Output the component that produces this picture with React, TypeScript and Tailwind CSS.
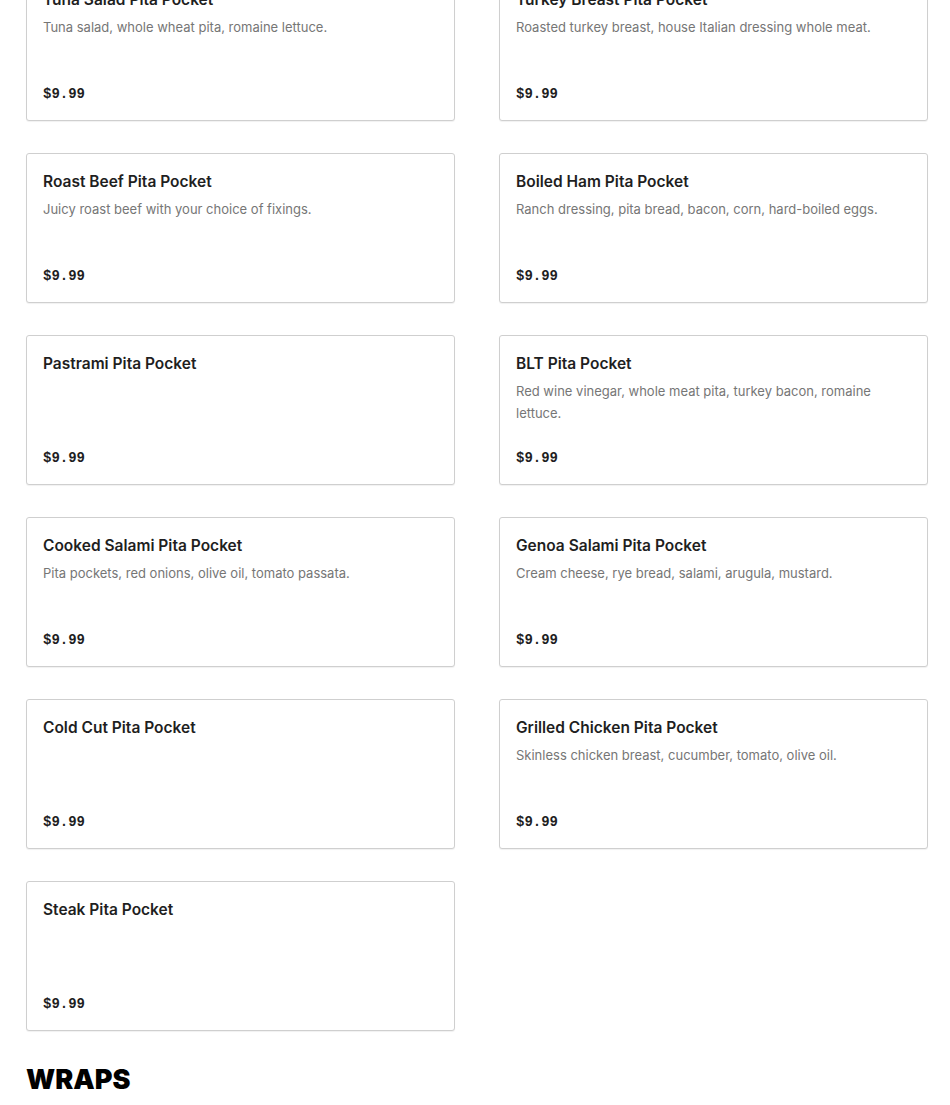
import React from "react";

type Item = { name: string; desc?: string; price: string };

const pitas: Item[] = [
  { name: "Tuna Salad Pita Pocket", desc: "Tuna salad, whole wheat pita, romaine lettuce.", price: "$9.99" },
  { name: "Turkey Breast Pita Pocket", desc: "Roasted turkey breast, house Italian dressing whole meat.", price: "$9.99" },
  { name: "Roast Beef Pita Pocket", desc: "Juicy roast beef with your choice of fixings.", price: "$9.99" },
  { name: "Boiled Ham Pita Pocket", desc: "Ranch dressing, pita bread, bacon, corn, hard-boiled eggs.", price: "$9.99" },
  { name: "Pastrami Pita Pocket", price: "$9.99" },
  { name: "BLT Pita Pocket", desc: "Red wine vinegar, whole meat pita, turkey bacon, romaine lettuce.", price: "$9.99" },
  { name: "Cooked Salami Pita Pocket", desc: "Pita pockets, red onions, olive oil, tomato passata.", price: "$9.99" },
  { name: "Genoa Salami Pita Pocket", desc: "Cream cheese, rye bread, salami, arugula, mustard.", price: "$9.99" },
  { name: "Cold Cut Pita Pocket", price: "$9.99" },
  { name: "Grilled Chicken Pita Pocket", desc: "Skinless chicken breast, cucumber, tomato, olive oil.", price: "$9.99" },
  { name: "Steak Pita Pocket", price: "$9.99" },
];

const MenuCard: React.FC<{ item: Item }> = ({ item }) => (
  <div className="flex min-h-[150px] flex-col rounded-[3px] border border-[#cfcfcf] bg-white px-4 pt-4 pb-4 shadow-[0_1px_1px_rgba(0,0,0,0.06)]">
    <h3 className="text-[15.5px] leading-6 font-semibold text-[#1f1f1f]">{item.name}</h3>
    {item.desc && (
      <p className="mt-1 text-[13px] leading-[22px] text-[#767676]">{item.desc}</p>
    )}
    <p className="mt-auto pt-5 font-['Liberation_Mono',monospace] text-[14px] leading-5 font-bold text-[#1f1f1f]">
      {item.price}
    </p>
  </div>
);

export default function App() {
  return (
    <div className="h-[1105px] overflow-hidden bg-white font-['Inter',sans-serif]">
      <div className="-mt-[29px] pl-[26px] pr-[22px]">
        <div className="grid grid-cols-2 gap-x-[44px] gap-y-8">
          {pitas.map((item) => (
            <MenuCard key={item.name} item={item} />
          ))}
        </div>

        <h2 className="mt-[33px] text-[27px] leading-8 font-black text-black">WRAPS</h2>
        <p className="mt-2 text-[13px] leading-[22px] text-[#767676]">
          Warm flour tortillas rolled around fresh meats, crisp vegetables and our house sauces.
        </p>
      </div>
    </div>
  );
}
